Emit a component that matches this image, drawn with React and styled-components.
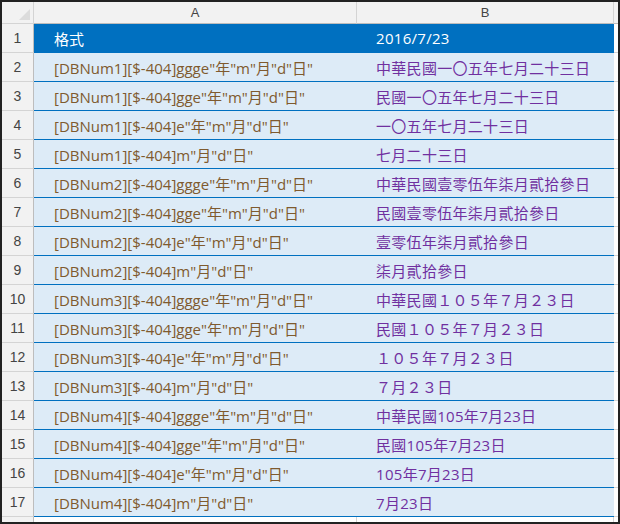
import React from 'react';
import styled, { createGlobalStyle } from 'styled-components';

const Global = createGlobalStyle`
  body { margin: 0; background: #fff; font-family: "Noto Sans CJK TC", "Liberation Sans", sans-serif; }
`;

const Frame = styled.div`
  width: 620px;
  height: 524px;
  box-sizing: border-box;
  border: 2px solid #222;
  overflow: hidden;
  background: #fff;
`;

const Grid = styled.div`
  display: grid;
  grid-template-columns: 32px 323px 257px 10px;
  grid-template-rows: 22px repeat(17, 29px) 20px;
`;

const Corner = styled.div`
  background: #f2f2f2;
  border-right: 1px solid #d4d4d4;
  border-bottom: 1px solid #d4d4d4;
  position: relative;
  &::after {
    content: '';
    position: absolute;
    right: 3px;
    bottom: 3px;
    border-left: 11px solid transparent;
    border-bottom: 11px solid #dcdcdc;
  }
`;

const ColHead = styled.div`
  background: #f2f2f2;
  border-right: 1px solid #d4d4d4;
  border-bottom: 1px solid #bdbdbd;
  color: #444;
  font-family: "Liberation Sans", sans-serif;
  font-size: 13px;
  display: flex;
  align-items: center;
  justify-content: center;
`;

const RowHead = styled.div`
  background: #f2f2f2;
  border-right: 1px solid #bdbdbd;
  border-bottom: 1px solid #d4d4d4;
  color: #444;
  font-family: "Liberation Sans", sans-serif;
  font-size: 14px;
  display: flex;
  align-items: center;
  justify-content: center;
`;

const Cell = styled.div`
  background: ${p => (p.head ? '#0070c0' : '#ddebf7')};
  border-bottom: 1px solid #0070c0;
  color: ${p => (p.head ? '#fff' : p.b ? '#7030a0' : '#7f5a2e')};
  font-size: 15px;
  display: flex;
  align-items: center;
  padding-left: ${p => (p.b ? '19px' : '20px')};
  white-space: nowrap;
  overflow: hidden;
  font-family: "Open Sans", "Noto Sans CJK TC", sans-serif;
  letter-spacing: ${p => (p.b ? '0.3px' : '0')};
`;

const Blank = styled.div`
  background: #fff;
  border-right: 1px solid #d4d4d4;
  border-bottom: 1px solid #d4d4d4;
`;

const rows = [
  ['[DBNum1][$-404]ggge"年"m"月"d"日"', '中華民國一〇五年七月二十三日'],
  ['[DBNum1][$-404]gge"年"m"月"d"日"', '民國一〇五年七月二十三日'],
  ['[DBNum1][$-404]e"年"m"月"d"日"', '一〇五年七月二十三日'],
  ['[DBNum1][$-404]m"月"d"日"', '七月二十三日'],
  ['[DBNum2][$-404]ggge"年"m"月"d"日"', '中華民國壹零伍年柒月貳拾參日'],
  ['[DBNum2][$-404]gge"年"m"月"d"日"', '民國壹零伍年柒月貳拾參日'],
  ['[DBNum2][$-404]e"年"m"月"d"日"', '壹零伍年柒月貳拾參日'],
  ['[DBNum2][$-404]m"月"d"日"', '柒月貳拾參日'],
  ['[DBNum3][$-404]ggge"年"m"月"d"日"', '中華民國１０５年７月２３日'],
  ['[DBNum3][$-404]gge"年"m"月"d"日"', '民國１０５年７月２３日'],
  ['[DBNum3][$-404]e"年"m"月"d"日"', '１０５年７月２３日'],
  ['[DBNum3][$-404]m"月"d"日"', '７月２３日'],
  ['[DBNum4][$-404]ggge"年"m"月"d"日"', '中華民國105年7月23日'],
  ['[DBNum4][$-404]gge"年"m"月"d"日"', '民國105年7月23日'],
  ['[DBNum4][$-404]e"年"m"月"d"日"', '105年7月23日'],
  ['[DBNum4][$-404]m"月"d"日"', '7月23日'],
];

export default function App() {
  return (
    <Frame>
      <Global />
      <Grid>
        <Corner />
        <ColHead>A</ColHead>
        <ColHead>B</ColHead>
        <ColHead />
        <RowHead>1</RowHead>
        <Cell head>格式</Cell>
        <Cell head b>2016/7/23</Cell>
        <Blank />
        {rows.map(([a, b], i) => (
          <React.Fragment key={i}>
            <RowHead>{i + 2}</RowHead>
            <Cell>{a}</Cell>
            <Cell b>{b}</Cell>
            <Blank />
          </React.Fragment>
        ))}
        <RowHead />
        <Blank />
        <Blank />
        <Blank />
      </Grid>
    </Frame>
  );
}
